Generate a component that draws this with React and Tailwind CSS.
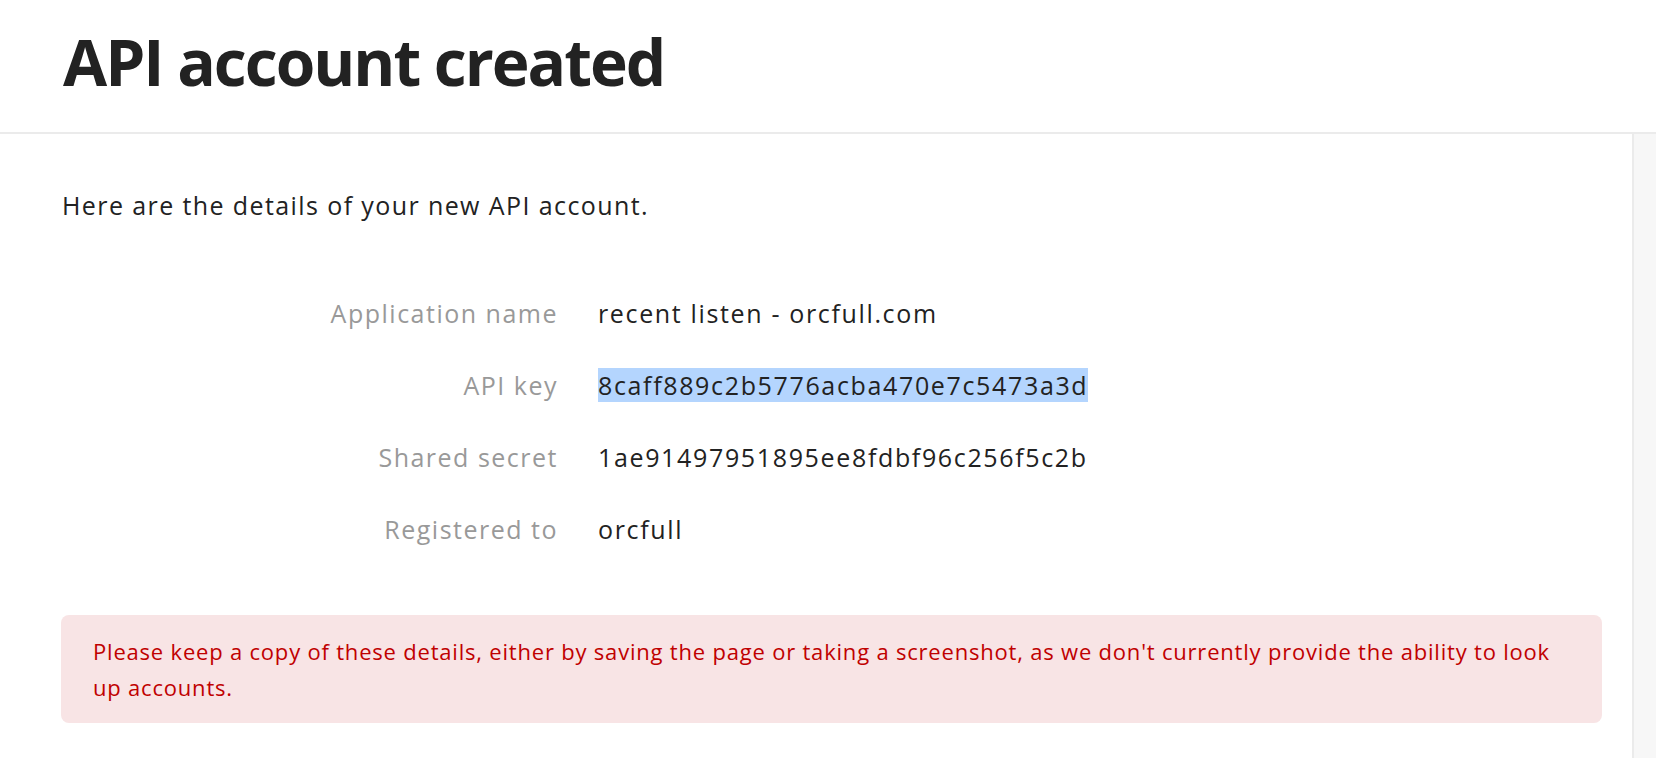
export default function App() {
  const rows = [
    { label: "Application name", value: "recent listen - orcfull.com" },
    { label: "API key", value: "8caff889c2b5776acba470e7c5473a3d", selected: true },
    { label: "Shared secret", value: "1ae91497951895ee8fdbf96c256f5c2b" },
    { label: "Registered to", value: "orcfull" },
  ];

  return (
    <div className="min-h-[758px] flex flex-col bg-white font-['Open_Sans',sans-serif] text-[#222]">
      {/* page header */}
      <header className="h-[134px] pl-[63px] border-b-2 border-[#ebebeb]">
        <h1 className="pt-[22px] text-[64px] font-bold leading-[80px] tracking-[-2px] text-[#222]">
          API account created
        </h1>
      </header>

      <div className="flex flex-1">
        {/* main column */}
        <main className="w-[1632px] pl-[62px] pr-[30px] pt-[54px] pb-10">
          <p className="text-[25px] leading-[35px] tracking-[1.4px]">Here are the details of your new API account.</p>

          <dl className="mt-[73px] grid grid-cols-[496px_1fr] gap-x-[40px] gap-y-[37px] text-[25px] leading-[35px]">
            {rows.map((row) => (
              <Row key={row.label} {...row} />
            ))}
          </dl>

          <div className="mt-[68px] -ml-px rounded-[8px] bg-[#f8e4e5] pl-[32px] pr-[28px] py-[18px] text-[22px] leading-[36px] tracking-[0.8px] text-[#c00000]">
            Please keep a copy of these details, either by saving the page or taking a screenshot, as we don't
            currently provide the ability to look up accounts.
          </div>
        </main>

        {/* sidebar */}
        <aside className="flex-1 border-l-2 border-[#ebebeb] bg-[#f7f7f7]" />
      </div>
    </div>
  );
}

function Row({ label, value, selected }) {
  return (
    <>
      <dt className="text-right text-[#999] tracking-[1.5px]">{label}</dt>
      <dd className="tracking-[1.65px]">{selected ? <span className="bg-[#b4d5fe]">{value}</span> : value}</dd>
    </>
  );
}
